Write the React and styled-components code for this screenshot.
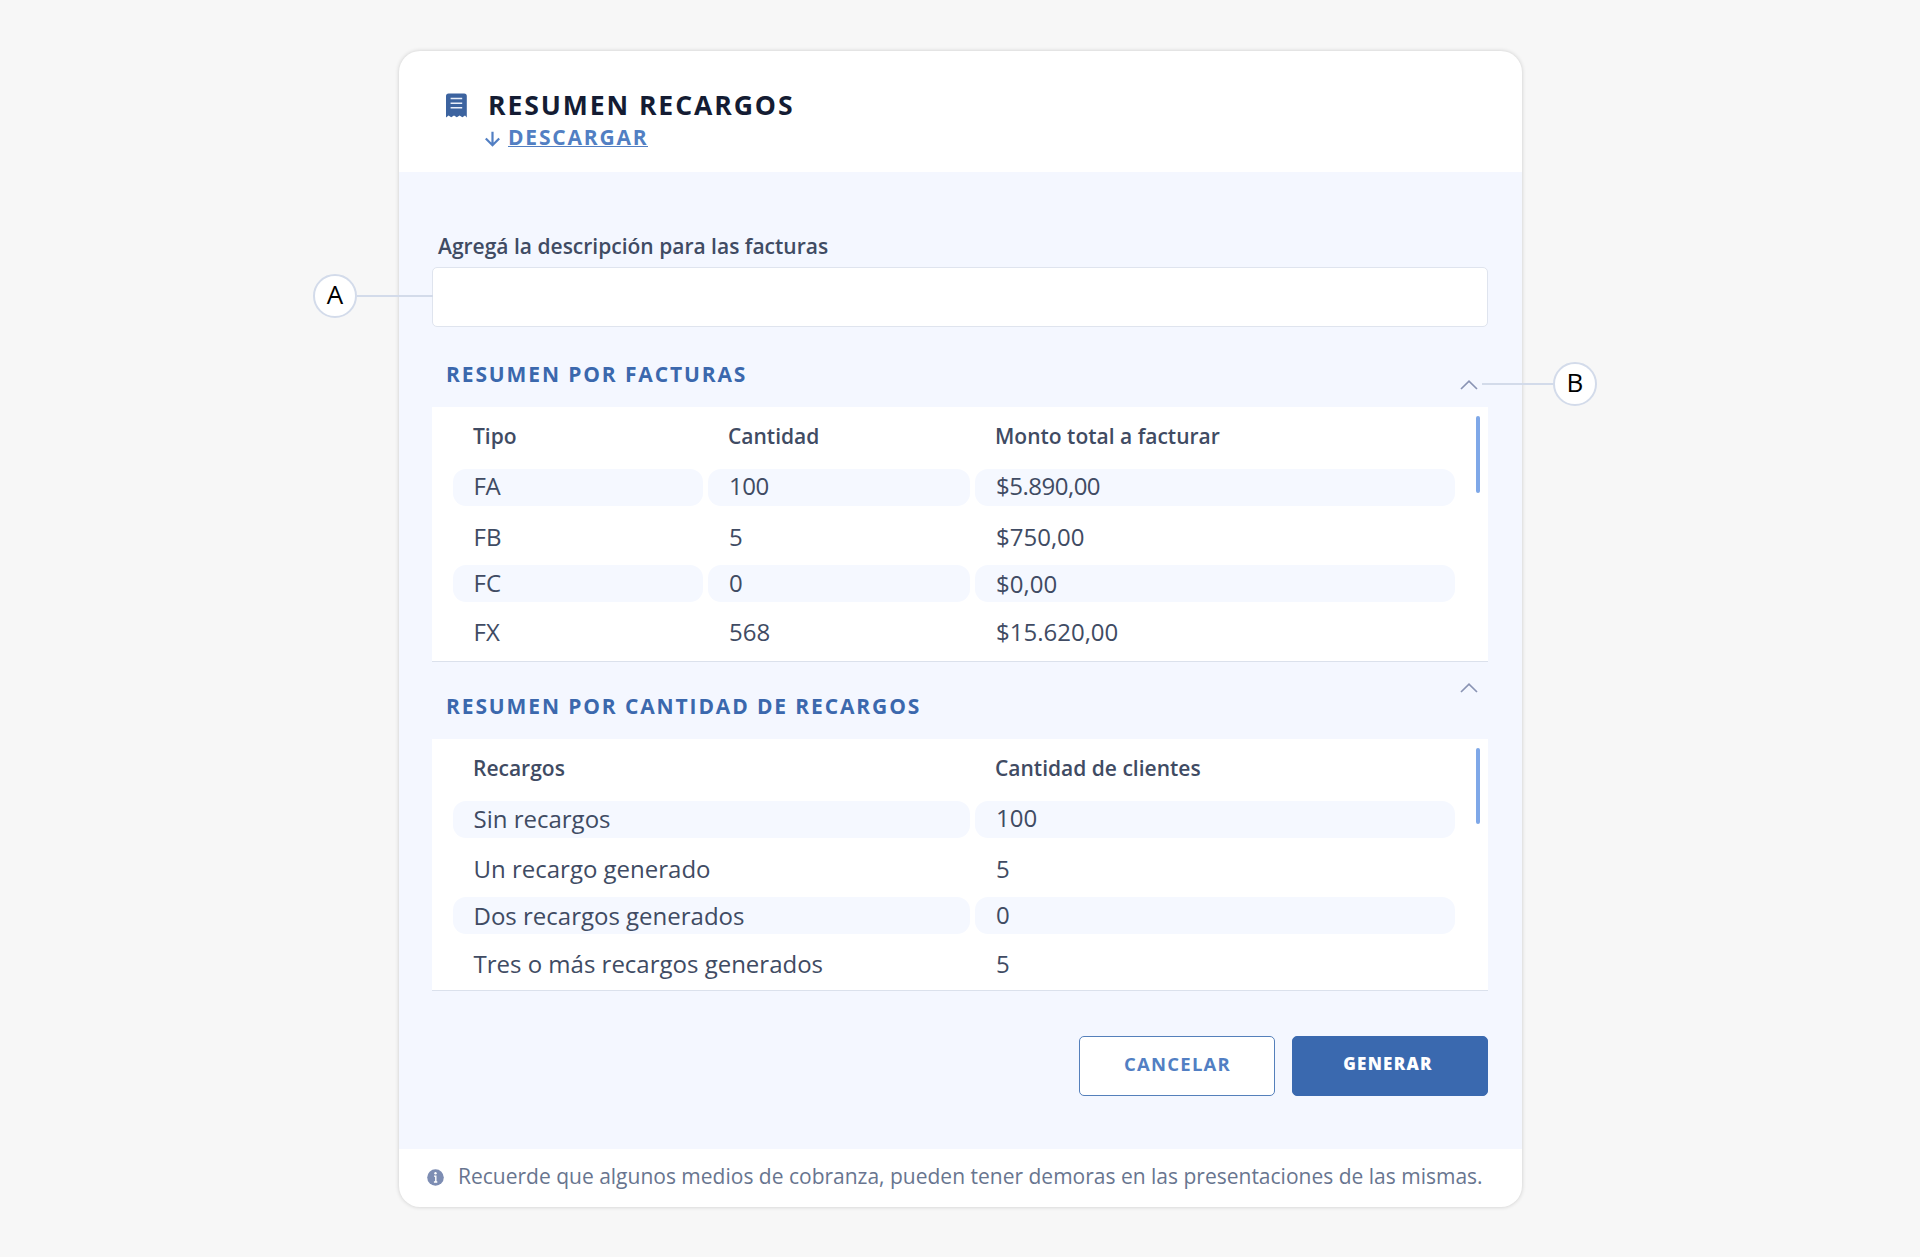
import styled, { createGlobalStyle } from 'styled-components';

const GlobalStyle = createGlobalStyle`
  * {
    box-sizing: border-box;
  }
  body {
    margin: 0;
    background: #f7f7f7;
    font-family: 'Open Sans', 'Noto Sans', sans-serif;
    color: #404b63;
  }
  button {
    font-family: inherit;
    cursor: pointer;
  }
`;

const Page = styled.main`
  height: 1257px;
  padding: 51px 398px 50px 399px;
  overflow: hidden;
`;

const Card = styled.section`
  height: 1156px;
  display: flex;
  flex-direction: column;
  border-radius: 21px;
  background: #fff;
  box-shadow: 0 0 4px rgba(0, 0, 0, 0.18);
`;

const Header = styled.header`
  height: 121px;
  padding: 37px 0 0 47px;
`;

const TitleRow = styled.div`
  display: flex;
  align-items: center;
  gap: 20px;
  height: 34px;
`;

const Title = styled.h1`
  margin: 0;
  font-size: 26.6px;
  line-height: 34px;
  font-weight: 700;
  letter-spacing: 1.9px;
  color: #141c33;
`;

const DownloadRow = styled.div`
  display: flex;
  align-items: center;
  gap: 7px;
  margin: 2px 0 0 39px;
  color: #527fc3;
  svg {
    margin-top: 3px;
  }
`;

const DownloadLink = styled.a`
  height: 23px;
  border-bottom: 1px solid #527fc3;
  font-size: 21px;
  line-height: 26px;
  font-weight: 700;
  letter-spacing: 1.8px;
  margin-bottom: 3px;
`;

const Body = styled.div`
  flex: 1;
  padding: 61px 34px 0 33px;
  background: #f4f7ff;
`;

const Field = styled.div`
  position: relative;
`;

const Label = styled.label`
  display: block;
  padding-left: 6px;
  margin-bottom: 8px;
  font-size: 21px;
  line-height: 26px;
  font-weight: 600;
`;

const Input = styled.input`
  display: block;
  width: 100%;
  height: 60px;
  border: 1px solid #dfe4ee;
  border-radius: 5px;
  background: #fff;
  outline: none;
`;

const SectionHead = styled.div`
  position: relative;
  display: flex;
  justify-content: space-between;
  align-items: flex-start;
  height: ${(props) => props.$height}px;
  padding: ${(props) => props.$top}px 10px 0 14px;
`;

const SectionTitle = styled.h2`
  margin: 0;
  font-size: 21px;
  line-height: 26px;
  font-weight: 700;
  letter-spacing: 1.88px;
  color: #3b68ad;
`;

const Toggle = styled.button`
  display: flex;
  padding: 0;
  border: 0;
  background: transparent;
  color: #8a94b4;
  margin-top: ${(props) => props.$offset}px;
`;

const TablePanel = styled.div`
  display: flex;
  padding-left: 21px;
  background: #fff;
  border-bottom: 1px solid #dbe1ec;
`;

const Rows = styled.div`
  width: 1002px;
`;

const Row = styled.div`
  display: grid;
  grid-template-columns: ${(props) => props.$columns};
  column-gap: 5px;
  height: ${(props) => props.$height}px;
`;

const HeadCell = styled.div`
  display: flex;
  align-items: center;
  padding: 0 0 4px 20px;
  font-size: 21px;
  line-height: 26px;
  font-weight: 600;
`;

const Cell = styled.div`
  display: flex;
  align-items: center;
  padding-left: 21px;
  padding-top: ${(props) => Math.max(props.$drop, 0)}px;
  padding-bottom: ${(props) => Math.max(-props.$drop, 0)}px;
  border-radius: 13px;
  background: ${(props) => (props.$filled ? '#f5f8ff' : 'transparent')};
  font-size: 24px;
  line-height: 32px;
  letter-spacing: ${(props) => props.$spacing || 0}px;
  &:first-child {
    padding-left: 20.5px;
  }
`;

const ScrollThumb = styled.div`
  width: 4px;
  height: ${(props) => props.$height}px;
  margin: 9px 0 0 21px;
  border-radius: 2px;
  background: #7fa8e8;
`;

const Actions = styled.div`
  display: flex;
  justify-content: flex-end;
  gap: 17px;
  margin-top: 45px;
`;

const Button = styled.button`
  width: 196px;
  height: 60px;
  padding: ${(props) => (props.$primary ? '0 4px 5px 0' : '0 0 6px 1px')};
  border-radius: 5px;
  border: 1px solid ${(props) => (props.$primary ? '#3a69af' : '#5580bb')};
  background: ${(props) => (props.$primary ? '#3a69af' : '#fff')};
  color: ${(props) => (props.$primary ? '#fff' : '#527fc3')};
  font-size: ${(props) => (props.$primary ? 17 : 18.5)}px;
  font-weight: ${(props) => (props.$primary ? 800 : 700)};
  letter-spacing: 1.25px;
`;

const Footer = styled.footer`
  display: flex;
  align-items: center;
  height: 58px;
  padding: 0 0 3px 28px;
  gap: 14px;
  font-size: 21px;
  color: #68758f;
  white-space: nowrap;
  svg {
    margin-top: 2px;
  }
  span {
    margin-top: -1px;
  }
`;

const Callout = styled.div`
  position: absolute;
  top: ${(props) => props.$top}px;
  ${(props) => (props.$side === 'left' ? 'right: 1055px;' : 'left: 1050px;')}
  flex-direction: ${(props) => (props.$side === 'left' ? 'row' : 'row-reverse')};
  display: flex;
  align-items: center;
`;

const Marker = styled.span`
  width: 44px;
  height: 44px;
  padding-bottom: 4px;
  display: flex;
  align-items: center;
  justify-content: center;
  border: 2px solid #d3dbea;
  border-radius: 50%;
  background: #fff;
  color: #000;
  font-size: 26px;
`;

const Connector = styled.span`
  width: ${(props) => props.$width}px;
  height: 2px;
  background: #d3dbea;
`;

const ReceiptIcon = () => (
  <svg width="22" height="25" viewBox="0 0 22 25">
    <path
      d="M2.600 .5h15.600a2.600 2.600 0 0 1 2.600 2.600V24.500l-1.800-1.900-2.600 1.600-2.800-1.600-2.800 1.600-2.800-1.600-2.800 1.600-2.600-1.600L0 24.500V3.100A2.600 2.600 0 0 1 2.600 .5z"
      fill="#3c639f"
    />
    <path d="M4.600 5.600h11.600M4.600 10.200h11.600M4.600 14.800h11.600" stroke="#e9effa" strokeWidth="1.500" />
  </svg>
);

const ArrowDownIcon = () => (
  <svg width="16" height="16" viewBox="0 0 16 16" fill="none" stroke="currentColor" strokeWidth="2.200">
    <path d="M7.500 .8v13.400M.8 7.500L7.500 14.300l6.700-6.800" />
  </svg>
);

const ChevronUpIcon = () => (
  <svg width="18" height="10" viewBox="0 0 18 10" fill="none" stroke="currentColor" strokeWidth="1.700">
    <path d="M1 9l8-7.800L17 9" />
  </svg>
);

const InfoIcon = () => (
  <svg width="17" height="17" viewBox="0 0 17 17">
    <circle cx="8.500" cy="8.500" r="8.300" fill="#7d8db3" />
    <path d="M7 7.100h1.800v5.900M6.900 13h3.400" stroke="#fff" strokeWidth="1.400" fill="none" />
    <circle cx="8.500" cy="4.200" r="1.200" fill="#fff" />
  </svg>
);

const invoices = {
  columns: '250px 262px 480px',
  head: ['Tipo', 'Cantidad', 'Monto total a facturar'],
  thumb: 77,
  rows: [
    { height: 37, drop: [-3, -3, -3], spacing: -0.5, cells: ['FA', '100', '$5.890,00'] },
    { height: 59, drop: [2, 2, 2], cells: ['FB', '5', '$750,00'] },
    { height: 37, drop: [-2, -2, 0], cells: ['FC', '0', '$0,00'] },
    { height: 59, drop: [0, 0, 0], cells: ['FX', '568', '$15.620,00'] },
  ],
};

const surcharges = {
  columns: '517px 480px',
  head: ['Recargos', 'Cantidad de clientes'],
  thumb: 76,
  rows: [
    { height: 37, drop: [-1, -3], cells: ['Sin recargos', '100'] },
    { height: 59, drop: [2, 2], cells: ['Un recargo generado', '5'] },
    { height: 37, drop: [0, -2], cells: ['Dos recargos generados', '0'] },
    { height: 56, drop: [4, 4], cells: ['Tres o más recargos generados', '5'] },
  ],
};

function SummaryTable({ columns, head, rows, thumb }) {
  return (
    <TablePanel>
      <Rows>
        <Row $columns={columns} $height={62}>
          {head.map((text) => (
            <HeadCell key={text}>{text}</HeadCell>
          ))}
        </Row>
        {rows.map((row, rowIndex) => (
          <Row key={row.cells[0]} $columns={columns} $height={row.height}>
            {row.cells.map((text, i) => (
              <Cell key={i} $filled={rowIndex % 2 === 0} $drop={row.drop[i]} $spacing={row.spacing}>
                {text}
              </Cell>
            ))}
          </Row>
        ))}
      </Rows>
      <ScrollThumb $height={thumb} />
    </TablePanel>
  );
}

export default function App() {
  return (
    <Page>
      <GlobalStyle />
      <Card>
        <Header>
          <TitleRow>
            <ReceiptIcon />
            <Title>RESUMEN RECARGOS</Title>
          </TitleRow>
          <DownloadRow>
            <ArrowDownIcon />
            <DownloadLink>DESCARGAR</DownloadLink>
          </DownloadRow>
        </Header>
        <Body>
          <Field>
            <Label htmlFor="description">Agregá la descripción para las facturas</Label>
            <Input id="description" />
            <Callout $side="left" $top={41}>
              <Marker>A</Marker>
              <Connector $width={76} />
            </Callout>
          </Field>

          <SectionHead $height={80} $top={34}>
            <SectionTitle>RESUMEN POR FACTURAS</SectionTitle>
            <Toggle $offset={19}>
              <ChevronUpIcon />
            </Toggle>
            <Callout $side="right" $top={35}>
              <Marker>B</Marker>
              <Connector $width={71} />
            </Callout>
          </SectionHead>
          <SummaryTable {...invoices} />

          <SectionHead $height={77} $top={31}>
            <SectionTitle>RESUMEN POR CANTIDAD DE RECARGOS</SectionTitle>
            <Toggle $offset={-10}>
              <ChevronUpIcon />
            </Toggle>
          </SectionHead>
          <SummaryTable {...surcharges} />

          <Actions>
            <Button>CANCELAR</Button>
            <Button $primary>GENERAR</Button>
          </Actions>
        </Body>
        <Footer>
          <InfoIcon />
          <span>Recuerde que algunos medios de cobranza, pueden tener demoras en las presentaciones de las mismas.</span>
        </Footer>
      </Card>
    </Page>
  );
}
